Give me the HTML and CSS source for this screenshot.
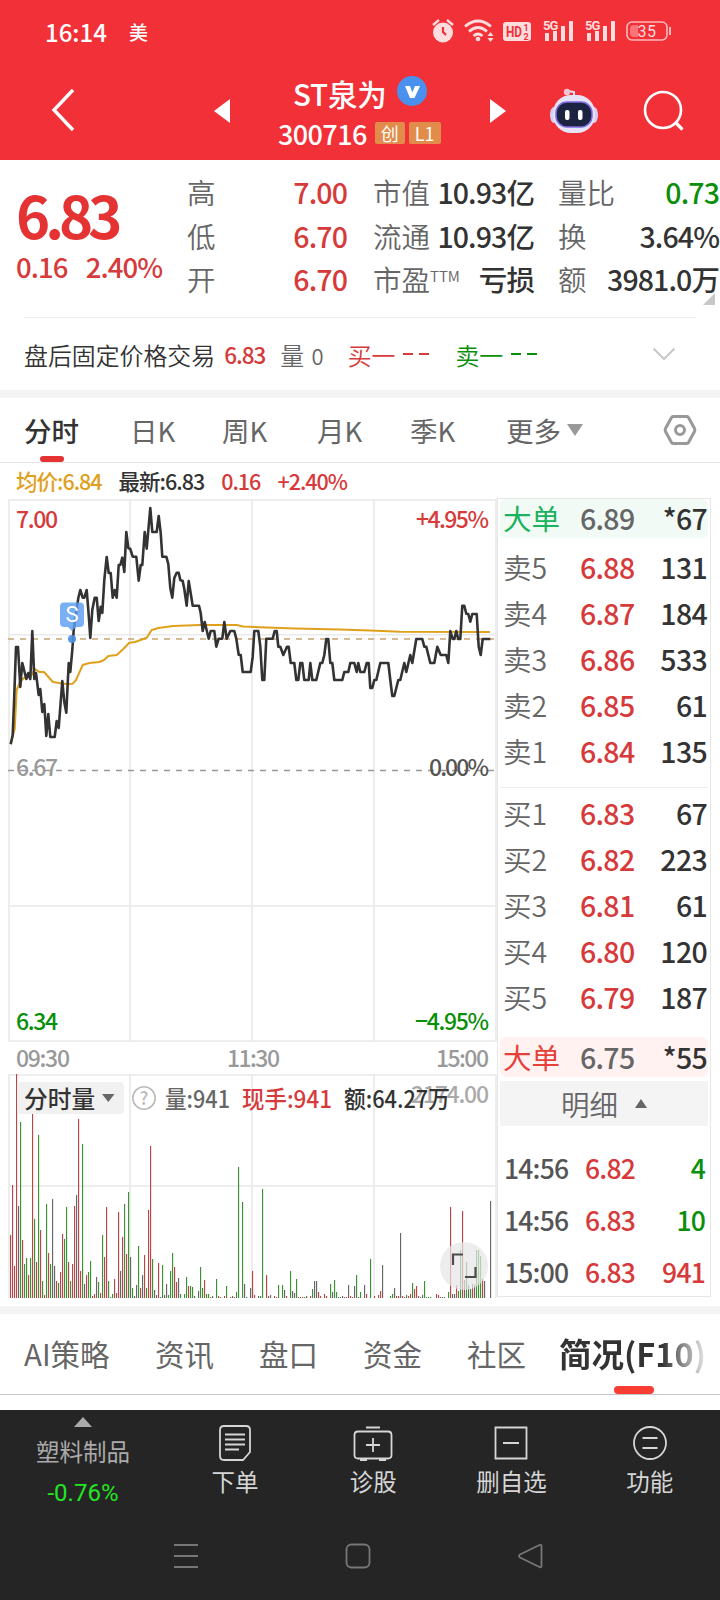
FILE: index.html
```
<!DOCTYPE html>
<html lang="zh-CN">
<head>
  <meta charset="utf-8" />
  <title>ST泉为 300716</title>
  <link rel="stylesheet" href="styles.css">
</head>
<body>
  <header class="header">
    <div class="status">
      <span class="clock">16:14</span>
      <span class="carrier">美</span>
      <svg class="status-icons" width="246" height="28" viewBox="430 18 246 28">
        <g fill="#ffdcdd">
          <circle cx="443" cy="33.500" r="10"/>
          <path d="M433 26l6-5M453 26l-6-5" stroke="#ffdcdd" stroke-width="2.4"/>
          <path d="M443 28v5l3 3" fill="none" stroke="#f23037" stroke-width="2.2"/>
          <g fill="none" stroke="#ffdcdd" stroke-width="2.8">
            <path d="M465 27.500q13-11 26 0M469 32.500q9-8 18 0M473.500 37q4.500-4 9 0"/>
          </g>
          <circle cx="478" cy="40" r="2.300"/>
          <path d="M487.500 37l3-4 3 4zM487.500 39l3 4 3-4z"/>
          <rect x="503" y="23" width="28" height="19" rx="3"/>
          <text x="506" y="38" class="hd" textLength="16" lengthAdjust="spacingAndGlyphs">HD</text>
          <text x="523.500" y="32" class="hd-num">1</text>
          <text x="523.500" y="40.500" class="hd-num">2</text>
          <text x="543" y="31" class="net">5G</text>
          <path d="M545 34h4v8h-4zM553 32h4v10h-4zM561 27h4v15h-4zM569 22h4v20h-4z"/>
          <text x="585" y="31" class="net">5G</text>
          <path d="M587 34h4v8h-4zM595 32h4v10h-4zM603 27h4v15h-4zM611 22h4v20h-4z"/>
          <rect x="627" y="23" width="40" height="18" rx="5" fill="none" stroke="#ffb9bb" stroke-width="1.600"/>
          <path d="M634 26h4v12h-4q-4 0-4-4v-4q0-4 4-4" fill="#fa7478"/>
          <path d="M669 28h2v8h-2z" fill="#ffb9bb"/>
          <text x="647" y="38" class="battery">35</text>
        </g>
      </svg>
    </div>
    <div class="titlebar">
      <svg class="back" width="24" height="44" viewBox="0 0 24 44"><path d="M22 2L3 22l19 20" fill="none" stroke="#fff" stroke-width="3.400"/></svg>
      <svg class="prev" width="16" height="24" viewBox="0 0 16 24"><path d="M16 0v24L0 12z" fill="#fff"/></svg>
      <div class="stock">
        <div class="stock-name"><span>ST泉为</span>
          <svg width="30" height="30" viewBox="0 0 30 30"><circle cx="15" cy="15" r="15" fill="#4a90ee"/><path d="M8 10l5 0 2.300 6.500L18 10h5l-5.500 12h-4.500z" fill="#fff"/></svg>
        </div>
        <div class="stock-code">300716 <b class="tag">创</b><b class="tag">L1</b></div>
      </div>
      <svg class="next" width="16" height="24" viewBox="0 0 16 24"><path d="M0 0v24l16-12z" fill="#fff"/></svg>
      <svg class="robot" width="50" height="46" viewBox="0 0 50 46">
        <path d="M25 8V4l-6-1" fill="none" stroke="#e9dff8" stroke-width="2"/>
        <circle cx="18" cy="4" r="3.200" fill="#f3c3d2"/>
        <ellipse cx="5" cy="27" rx="4" ry="8" fill="#d5cdf5"/>
        <ellipse cx="45" cy="27" rx="4" ry="8" fill="#d5cdf5"/>
        <rect x="4" y="7" width="42" height="38" rx="18" fill="#e6e2f8"/>
        <rect x="7" y="14" width="36" height="25" rx="11" fill="#1c2340" stroke="#7d6be0" stroke-width="1.500"/>
        <rect x="16" y="22" width="4.500" height="10" rx="2" fill="#fff"/>
        <rect x="29" y="22" width="4.500" height="10" rx="2" fill="#fff"/>
      </svg>
      <svg class="search" width="42" height="42" viewBox="0 0 42 42"><circle cx="20" cy="20" r="18" fill="none" stroke="#fff" stroke-width="2.600"/><path d="M32 32l7.500 7.500" stroke="#fff" stroke-width="3.200"/></svg>
    </div>
  </header>

  <section class="quote">
    <div class="price">
      <div class="price-last">6.83</div>
      <div class="price-change"><span>0.16</span><span>2.40%</span></div>
    </div>
    <dl class="stats">
      <dt>高</dt><dd class="up">7.00</dd><dt>市值</dt><dd>10.93亿</dd><dt>量比</dt><dd class="down">0.73</dd>
      <dt>低</dt><dd class="up">6.70</dd><dt>流通</dt><dd>10.93亿</dd><dt>换</dt><dd>3.64%</dd>
      <dt>开</dt><dd class="up">6.70</dd><dt>市盈<sup>TTM</sup></dt><dd>亏损</dd><dt>额</dt><dd>3981.0万</dd>
    </dl>
    <i class="corner"></i>
  </section>

  <section class="after-hours">
    <span>盘后固定价格交易</span>
    <span class="up ah-price">6.83</span>
    <span class="muted ah-vol">量 <em>0</em></span>
    <span class="up ah-buy">买一</span><i class="dashes up"></i>
    <span class="down ah-sell">卖一</span><i class="dashes down"></i>
    <svg width="24" height="14" viewBox="0 0 24 14"><path d="M1.500 1.500L12 12 22.500 1.500" fill="none" stroke="#c8c8c8" stroke-width="2"/></svg>
  </section>

  <nav class="periods">
    <a class="active">分时</a>
    <a>日K</a>
    <a>周K</a>
    <a>月K</a>
    <a>季K</a>
    <a class="more">更多<svg width="16" height="12" viewBox="0 0 16 12"><path d="M0 0h16L8 12z" fill="#999"/></svg></a>
    <svg class="settings" width="34" height="32" viewBox="0 0 34 32"><path d="M10 2.500h14q1 0 1.500 1l6 11q.8 1.500 0 3l-6 11q-.5 1-1.500 1H10q-1 0-1.500-1l-6-11q-.8-1.500 0-3l6-11q.5-1 1.500-1z" fill="none" stroke="#999" stroke-width="3"/><circle cx="17" cy="16" r="4.500" fill="none" stroke="#999" stroke-width="3"/></svg>
  </nav>

  <div class="legend">
    <span class="avg">均价:6.84</span>
    <span>最新:6.83</span>
    <span class="up">0.16</span>
    <span class="up">+2.40%</span>
  </div>

  <main class="board">
    <svg class="chart" width="497" height="801" viewBox="0 498 497 801">
      <g fill="none" stroke="#e9e9e9" stroke-width="1.600">
        <path d="M9 500H496V1041H9zM9 1298V1075H496V1298"/>
        <path d="M130 500V1041M252 500V1041M374 500V1041M9 634.700H496M9 906H496"/>
        <path d="M130 1075V1298M252 1075V1298M374 1075V1298M9 1186H496"/>
      </g>
      <path d="M8 639H496" stroke="#c9a273" stroke-width="1.600" stroke-dasharray="6 6"/>
      <path d="M8 770.500H496" stroke="#999" stroke-width="1.600" stroke-dasharray="6 6"/>
      <polyline class="line-avg" points="10.700,744 13,735 14.700,729 16.700,690 20,682 24,678 31,676 35,669 39.300,672 44,672 49.300,678 53,682 59,683 66.700,684 72.700,683.700 76,680 79.300,672.700 82.700,665 89.300,663 99.300,662 104,660 108.300,656 116.700,655 123.300,649 129.300,642.700 135,642 146.700,637.700 151.700,630 158.300,628 173.300,626 200,625 236.700,625 243,626.500 260,627.300 295,628.500 340,629.500 370,630.500 400,631.700 490,632"/>
      <polyline class="line-price" points="10.700,744.300 12.700,735 14,703 16,647 18,647 20.300,687 22.300,663 26.300,679 28.300,673 30.300,679 32.300,631 34.300,679 36,673 38.700,695 40.300,689 42.300,712 44.300,704 46.300,736 48.300,714 50.300,737 54.700,737 56.700,721 58.700,728 62.300,681 64.300,702 66.300,712.700 68.700,663 70.300,672 72.300,650 73.700,630 78.300,598 80.300,590 82.700,597.700 84.300,597.700 86.700,590 88.700,615 90.300,638 92.300,610 94.700,597.700 96.700,597.700 98.700,621 100.700,606.700 102.300,613 104.300,580 106.700,557 108.700,573 110.700,573 112.700,597.700 114.700,590 116.700,597.700 118.700,565 120.300,565 122.300,557.700 124.300,572 126.300,532 128.300,548 130.300,549 132.700,556.700 136.300,556.700 138.700,580.700 140.700,565 142.300,565 144.700,532 146.700,548.700 150.300,508 152.300,532 156.700,532 158.700,516 160.700,533 162.300,556.700 166.300,556.700 168.300,564 170.300,588 172.300,597.700 174.300,578 176.700,572.700 178.700,572.700 180.300,580 182.700,581 184.300,589 186.700,605.700 188.700,581 192.700,605.700 199,605.700 200.700,613 202.700,631 204.700,622 208.700,638.700 210.700,631 214.300,631 216.300,646.700 218.700,638.700 222.300,638.700 224.300,622 226.700,638.700 230.300,631 234.300,631 236.300,638.700 238.700,654.700 240.700,655 242.700,672 250.700,672 252.700,656.700 254.300,631 258.300,631 260.300,646.700 262.300,680 264.300,680 266.300,638.700 272.700,638.700 274.700,631 276.700,631 278.300,646.700 280.300,646.700 283.300,655 287,646.700 288.700,646.700 290.700,663 294.300,663 296.300,680 298.300,680 300.300,663 302.300,663 304.300,680 308.700,680 310.300,663 312.300,680 316.300,680 320.300,663 322.300,663 324.300,655 326.300,639 328.300,639 330.300,663 332.300,663 334.300,680 342.300,680 344.300,672 348.300,672 350.300,663 354.300,663 356.700,672 358.300,663 360.300,672 364.300,672 366.700,663 368.700,663 370.300,688 372.300,688 374.300,680 376.300,680 380.300,663 388.300,663 390.300,680 392.300,696 394.300,696 398.300,680 400.300,680 404.300,663 406.300,672 410.300,655 412.300,663 416.300,639 422.300,639 424.300,646.700 426.300,646.700 430.300,663 434.300,663 437.300,646.700 440.700,655 446.300,655 448.300,663 450.300,631 452.700,639 454.300,639 456.300,631 458.300,639 460.300,639 462.300,605.700 464.300,605.700 466.300,613.700 468.300,614 470.300,621.700 472.300,614 476.700,614 478.700,646.700 480.700,655 482.700,639 490.300,639"/>
      <path d="M64 602.500h16q4 0 4 4V623q0 4-4 4h-4l-4 4-4-4h-4q-4 0-4-4v-16.500q0-4 4-4z" fill="#5b9ff0" fill-opacity=".82"/>
      <text x="72" y="622" class="mark">S</text>
      <circle cx="72" cy="639" r="4" fill="#4a90e2" fill-opacity=".9"/>

      <g class="axis">
        <text x="16" y="528" textLength="42" fill="#d63a3a">7.00</text>
        <text x="416" y="528" textLength="73" fill="#d63a3a">+4.95%</text>
        <text x="16" y="776" textLength="42" fill="#999">6.67</text>
        <text x="429" y="776" textLength="60" fill="#555">0.00%</text>
        <text x="16" y="1029.500" textLength="42" fill="#0a8f0a">6.34</text>
        <text x="415" y="1029.500" textLength="74" fill="#0a8f0a">−4.95%</text>
        <text x="16" y="1067" textLength="54" fill="#999">09:30</text>
        <text x="227" y="1067" textLength="53" fill="#999">11:30</text>
        <text x="436" y="1067" textLength="53" fill="#999">15:00</text>
        <text x="411" y="1103" textLength="78" fill="#aaa">2174.00</text>
      </g>

      <g id="volume"></g>

      <rect x="17" y="1082" width="107" height="32" rx="4" fill="#f1f1f1"/>
      <g class="vol-legend">
        <text x="24" y="1108" fill="#333">分时量</text>
        <path d="M102 1094h12.500l-6.200 8z" fill="#666"/>
        <circle cx="144" cy="1098" r="11.200" fill="none" stroke="#bbb" stroke-width="1.600"/>
        <text x="144" y="1105" class="help">?</text>
        <text x="165" y="1107.500" textLength="65" lengthAdjust="spacingAndGlyphs" fill="#666">量:941</text>
        <text x="242" y="1107.500" textLength="90" lengthAdjust="spacingAndGlyphs" fill="#d63a3a">现手:941</text>
        <text x="344" y="1107.500" textLength="106" lengthAdjust="spacingAndGlyphs" fill="#333">额:64.27万</text>
      </g>
      <circle cx="464" cy="1266" r="24" fill="#e6e6e6" fill-opacity=".72"/>
      <path d="M453 1265v-10.500h10M465 1277h10.500v-10" fill="none" stroke="#4c4c4c" stroke-width="2.200"/>
    </svg>

    <aside class="book">
      <div class="row big sell"><b>大单</b><span>6.89</span><span>*67</span></div>
      <div class="levels">
        <div class="row"><b>卖5</b><span>6.88</span><span>131</span></div>
        <div class="row"><b>卖4</b><span>6.87</span><span>184</span></div>
        <div class="row"><b>卖3</b><span>6.86</span><span>533</span></div>
        <div class="row"><b>卖2</b><span>6.85</span><span>61</span></div>
        <div class="row"><b>卖1</b><span>6.84</span><span>135</span></div>
      </div>
      <div class="levels bids">
        <div class="row"><b>买1</b><span>6.83</span><span>67</span></div>
        <div class="row"><b>买2</b><span>6.82</span><span>223</span></div>
        <div class="row"><b>买3</b><span>6.81</span><span>61</span></div>
        <div class="row"><b>买4</b><span>6.80</span><span>120</span></div>
        <div class="row"><b>买5</b><span>6.79</span><span>187</span></div>
      </div>
      <div class="row big buy"><b>大单</b><span>6.75</span><span>*55</span></div>
      <div class="detail">明细<svg width="12" height="9" viewBox="0 0 12 9"><path d="M0 9h12L6 0z" fill="#666"/></svg></div>
      <div class="trades">
        <div><time>14:56</time><span>6.82</span><span class="down">4</span></div>
        <div><time>14:56</time><span>6.83</span><span class="down">10</span></div>
        <div><time>15:00</time><span>6.83</span><span class="up">941</span></div>
      </div>
    </aside>
  </main>

  <nav class="sections">
    <a>AI策略</a>
    <a>资讯</a>
    <a>盘口</a>
    <a>资金</a>
    <a>社区</a>
    <a class="active"><span>简况(F10)</span></a>
  </nav>

  <footer class="footer">
    <div class="actions">
      <div class="sector">
        <svg width="18" height="10" viewBox="0 0 18 10"><path d="M0 10h18L9 0z" fill="#aaa"/></svg>
        <span>塑料制品</span>
        <em>-0.76%</em>
      </div>
      <div class="action">
        <svg width="36" height="38" viewBox="0 0 36 38"><path d="M7 2h22q4 0 4 4v22l-7 8H7q-4 0-4-4V6q0-4 4-4zM8 10.500h20M8 15.500h20M8 20.500h20M8 25.500h14"/></svg>
        <span>下单</span>
      </div>
      <div class="action">
        <svg width="40" height="38" viewBox="0 0 40 38"><path d="M13 3.500h14M5 7.500h30q3.500 0 3.500 3.500v20q0 3.500-3.500 3.500H5q-3.500 0-3.500-3.500V11q0-3.500 3.500-3.500zM7 36h7M26 36h7M13 21h14M20 14v14"/></svg>
        <span>诊股</span>
      </div>
      <div class="action">
        <svg width="36" height="38" viewBox="0 0 36 38"><path d="M2.500 3.500h31v31h-31zM10 19h16"/></svg>
        <span>删自选</span>
      </div>
      <div class="action">
        <svg width="36" height="38" viewBox="0 0 36 38"><circle cx="18" cy="19" r="16"/><path d="M10.500 14h15M10.500 24h15"/></svg>
        <span>功能</span>
      </div>
    </div>
    <div class="sysnav">
      <svg width="26" height="26" viewBox="0 0 26 26"><path d="M1 2h24M1 13h24M1 24h24"/></svg>
      <svg width="26" height="26" viewBox="0 0 26 26"><rect x="1.500" y="1.500" width="23" height="23" rx="5"/></svg>
      <svg width="26" height="26" viewBox="0 0 26 26"><path d="M24.500 3v20q0 2-2 1L3 14.500q-2-1.500 0-3L22.500 2q2-1 2 1z"/></svg>
    </div>
  </footer>
  <script src="chart.js"></script>
</body>
</html>
```
FILE: styles.css
```
html, body {
  margin: 0;
  padding: 0;
}

body {
  width: 720px;
  height: 1600px;
  overflow: hidden;
  background: #fff;
  color: #333;
  font-family: "Noto Sans CJK SC", "Noto Sans", sans-serif;
  white-space: nowrap;
}

b, em, i {
  font-weight: inherit;
  font-style: normal;
}

svg {
  display: block;
  flex: none;
}

.up { color: #d63a3a; }
.down { color: #0a8f0a; }
.muted { color: #666; }

/* header */

.header {
  height: 160px;
  background: #f23037;
  color: #fff;
}

.status {
  display: flex;
  height: 62px;
  align-items: center;
  padding-left: 45px;
}

.clock {
  width: 84px;
  font-size: 24px;
  font-weight: 500;
}

.carrier {
  font-size: 19px;
  font-weight: 500;
}

.status-icons {
  margin-left: auto;
  margin-right: 44px;
}

.status-icons text {
  font-family: Roboto, sans-serif;
}

.hd { font-size: 15px; font-weight: 700; fill: #f23037; }
.hd-num { font-size: 9px; font-weight: 700; fill: #f23037; }
.net { font-size: 13px; font-weight: 700; letter-spacing: -1px; }
.battery { font-size: 16px; text-anchor: middle; letter-spacing: 0.5px; }

.titlebar {
  display: flex;
  height: 98px;
  align-items: center;
}

.back { margin-left: 51px; margin-top: -2px; }
.prev { margin-left: 139px; }
.next { margin-left: 48px; }
.robot { margin-left: 43px; }
.search { margin-left: 44px; }

.stock {
  width: 163px;
  margin-left: 48px;
  margin-right: 1px;
}

.stock-name {
  display: flex;
  height: 42px;
  align-items: center;
  padding-left: 15px;
  padding-top: 2px;
  font-size: 29.500px;
  font-weight: 500;
  letter-spacing: -0.2px;
}

.stock-name span {
  margin-top: 3px;
}

.stock-name svg {
  margin-left: 10px;
}

.stock-code {
  display: flex;
  height: 42px;
  align-items: center;
  font-size: 27px;
  font-weight: 500;
  letter-spacing: -0.6px;
}

.tag {
  margin-left: 4px;
  padding: 0 6px;
  border-radius: 2px;
  background: #e28c4b;
  font-size: 18px;
  font-weight: 400;
  line-height: 22px;
  letter-spacing: 0;
}

.tag:first-of-type {
  margin-left: 8px;
}

/* quote */

.quote {
  position: relative;
  display: flex;
  height: 157px;
}

.price {
  width: 187px;
  padding-left: 16px;
  box-sizing: border-box;
  color: #d63a3a;
  font-weight: 500;
}

.price-last {
  margin-top: 19px;
  color: #e53333;
  font-size: 58px;
  font-weight: 700;
  line-height: 70px;
  letter-spacing: -5px;
}

.price-change {
  display: flex;
  gap: 18px;
  margin-top: -1px;
  font-size: 27.500px;
  line-height: 36px;
  letter-spacing: -0.9px;
}

.stats {
  display: grid;
  flex: none;
  margin: 10px 0 0;
  grid-template-columns: 80px 80px 94px 93px 92px 93px;
  grid-auto-rows: 43.7px;
  font-size: 28.500px;
  line-height: 44px;
}

.stats dt {
  color: #666;
  font-weight: 350;
}

.stats dd {
  display: flex;
  justify-content: flex-end;
  margin: 0;
  font-weight: 500;
  letter-spacing: -0.9px;
}

.stats dt:nth-of-type(3n+2) { margin-left: 26px; }
.stats dt:nth-of-type(3n) { margin-left: 24px; }

.stats sup {
  position: relative;
  top: -9px;
  font-size: 15px;
  line-height: 0;
  vertical-align: baseline;
}

.corner {
  position: absolute;
  right: 5px;
  bottom: 12px;
  border: 6px solid #c8c8c8;
  border-top-color: transparent;
  border-left-color: transparent;
}

/* after-hours strip */

.after-hours {
  display: flex;
  height: 72px;
  align-items: center;
  margin: 0 24px;
  border-top: 1px solid #ececec;
  font-size: 23.900px;
  font-weight: 350;
}

.ah-price { margin-left: 9px; font-size: 22.500px; font-weight: 500; letter-spacing: -1px; }
.ah-vol { margin-left: 15px; }
.ah-vol em { font-size: 22px; margin-left: 2px; }
.ah-buy { margin-left: 24px; }
.ah-sell { margin-left: 26px; }

.dashes {
  width: 6px;
  height: 2px;
  margin-left: 8px;
  border: solid;
  border-width: 0 10px;
}

.after-hours svg {
  margin-left: auto;
  margin-right: 20px;
}

/* period tabs */

.periods {
  display: grid;
  grid-template-columns: 106px 92px 95px 93px 96px 150px 40px;
  height: 64px;
  align-items: center;
  padding-left: 24px;
  border-top: 8px solid #f4f4f4;
  border-bottom: 1px solid #e6e6e6;
  color: #666;
  font-size: 27.500px;
}

.periods a {
  height: 64px;
  line-height: 64px;
  margin-top: -1px;
}

.periods .active {
  position: relative;
  color: #333;
  font-weight: 500;
}

.periods .active::after {
  content: "";
  position: absolute;
  left: 16px;
  bottom: 0;
  width: 24px;
  height: 6px;
  border-radius: 3px;
  background: #e53333;
}

.more {
  display: flex;
  align-items: center;
  gap: 6px;
}

.settings {
  margin-left: 7px;
}

.legend {
  display: flex;
  gap: 17px;
  height: 35px;
  padding-left: 16px;
  font-size: 21.500px;
  font-weight: 500;
  line-height: 36px;
  letter-spacing: -1px;
}

.avg { color: #dfa01c; }

/* chart and order book */

.board {
  display: flex;
  height: 808px;
}

.line-avg,
.line-price {
  fill: none;
  stroke-linejoin: round;
  stroke-width: 2;
  stroke: #dfa01c;
}

.line-price {
  stroke: #333;
  stroke-width: 2.6;
}

.mark {
  fill: #fff;
  font: 22px Roboto, sans-serif;
  text-anchor: middle;
}

.axis {
  font-size: 23px;
  font-weight: 500;
}

.vol-legend {
  font-size: 23.700px;
  font-weight: 500;
}

.help {
  fill: #bbb;
  font-size: 18px;
  text-anchor: middle;
}

.book {
  width: 214px;
  height: 799px;
  box-sizing: border-box;
  padding: 0 2px;
  border: 1px solid #e6e6e6;
}

.row {
  display: grid;
  grid-template-columns: 77px 60px 1fr;
  height: 46px;
  padding: 0 1px 0 3px;
  font-size: 28.500px;
  line-height: 44px;
}

.row b {
  color: #666;
  font-weight: 350;
}

.row span {
  color: #d63a3a;
  font-weight: 500;
  letter-spacing: -0.7px;
}

.row span:last-child {
  color: #333;
  text-align: right;
}

.levels {
  height: 242px;
  padding-top: 7px;
  border-bottom: 1px solid #eee;
}

.bids {
  height: 246px;
  padding-top: 3px;
  border: 0;
}

.big {
  height: 39px;
  border-radius: 6px;
  line-height: 37px;
}

.big b { font-weight: 400; }
.big span { color: #666; }
.sell { background: #f2faf6; }
.sell b { color: #1ab25c; }
.buy { height: 40px; background: #fff2f1; line-height: 39px; }
.buy b { color: #e5403a; }

.detail {
  display: flex;
  height: 45px;
  align-items: center;
  justify-content: center;
  gap: 17px;
  margin-top: 4px;
  margin-bottom: 16px;
  background: #f4f4f4;
  color: #666;
  font-size: 28.500px;
  font-weight: 350;
}

.trades div {
  display: grid;
  grid-template-columns: 81px 60px 1fr;
  height: 52px;
  padding: 0 3px 0 4px;
  color: #555;
  font-size: 26.500px;
  font-weight: 500;
  line-height: 52px;
  letter-spacing: -0.8px;
}

.trades time + span { color: #d63a3a; }
.trades span:last-child { text-align: right; }

/* bottom tabs */

.sections {
  display: grid;
  grid-template-columns: 131px 104px 104px 104px 92px 160px;
  height: 80px;
  padding-left: 24px;
  border-top: 8px solid #f4f4f4;
  border-bottom: 1px solid #c6c6c6;
  color: #666;
  font-size: 29.500px;
  line-height: 78px;
}

.sections .active {
  position: relative;
  font-size: 32.500px;
  font-weight: 700;
}

.sections .active span {
  background: linear-gradient(90deg, #333 70%, #ddd 98%);
  -webkit-background-clip: text;
  background-clip: text;
  color: transparent;
}

.sections .active::after {
  content: "";
  position: absolute;
  left: 55px;
  bottom: 0;
  width: 40px;
  height: 8px;
  border-radius: 4px;
  background: #f93d33;
}

.footer {
  height: 190px;
  margin-top: 15px;
  background: #252525;
  color: #d6d6d6;
}

.actions {
  display: grid;
  grid-template-columns: 166px repeat(4, 138.200px);
  height: 110px;
  font-size: 23.500px;
}

.sector,
.action {
  display: flex;
  flex-direction: column;
  align-items: center;
}

.sector {
  padding-top: 7px;
  color: #aaa;
}

.sector span { line-height: 48px; }

.sector em {
  color: #22e622;
  font: 24px/36px Roboto, sans-serif;
}

.action svg {
  margin-top: 14px;
  fill: none;
  stroke: #d6d6d6;
  stroke-width: 1.8;
}

.action span { line-height: 38px; }

.sysnav {
  display: flex;
  justify-content: center;
  gap: 146px;
  padding-top: 23px;
  padding-right: 4px;
}

.sysnav svg {
  fill: none;
  stroke: #777;
  stroke-width: 1.8;
}
```
FILE: chart.js
```
// per-minute volume: minute index, direction (r up, g down, k flat), bar height
var volume = "0r63 1r113 2r32 3r224 4k92 5g176 6r58 7g34 8g40 9r23 10g40 11r190 12g79 13r36 14g163 15r68 16g17 17r3 18g94 19r45 " +
  "20g34 21k99 22k32 23r17 24g15 25r26 26r64 27g59 28g91 29r36 30g17 31r34 32r92 33k103 34r179 35r27 36g154 37k14 38r23 39g26 " +
  "40g37 41r2 42r4 43k21 44g16 45r5 46g63 47r41 48r91 49g17 50g1 51g4 52r19 53r5 54r86 55k27 56r61 57g94 58r44 59g106 " +
  "60k41 61g10 62k2 63k13 64g52 65r10 66k23 67r43 68g10 69r88 70r152 71g39 72k8 73k3 74r35 75g1 76g33 77k3 78k14 79g3 " +
  "80g27 81g45 82r31 83r16 84k20 85g4 87g4 88g21 89r12 90g12 91g11 92k2 94k7 95g31 96g10 97r18 98g4 99g4 " +
  "100r1 101k2 103g19 104r2 105k1 107r2 108g12 110r1 111k2 112k1 113g6 114g131 116g96 117k14 118k1 " +
  "120k10 121r27 122r3 124k2 125g2 126g109 128r23 129k2 130k3 132r2 133r1 134g13 136g13 137k8 138r2 " +
  "140g27 141k7 142k5 143g19 144r1 145r1 146r1 147g1 148k2 150r2 151g9 152k17 153k17 154r6 155r2 157r4 158r2 " +
  "160g14 161k6 162g18 163g6 164k1 165k1 166k2 167r1 168r1 169k13 170r2 171r1 172k12 173g23 174r1 175g6 177k13 178r4 " +
  "180g39 182r2 184r3 185r7 186k33 190g2 191g4 192k10 193r2 194r2 195k65 196r2 197k1 198g3 199r2 " +
  "200r4 201g15 202r9 203r12 204k2 205k1 206k3 207g17 208g1 209g1 210g1 213r4 214r3 215k1 216k1 217k1 219g6 " +
  "220r91 221k4 222k4 223r13 224g7 225g48 226r87 227k18 228g36 229k13 230g9 231r14 232k13 233g48 234g48 235g42 236r19 237k17 240k97";
var colors = { r: '#b8474a', g: '#3c9232', k: '#666' };
var base = 1298;

volume.split(' ').forEach(function(item) {
  var m = item.match(/(\d+)([rgk])(\d+)/);
  var bar = document.createElementNS('http://www.w3.org/2000/svg', 'rect');
  bar.setAttribute('x', 10 + m[1] * 2);
  bar.setAttribute('y', base - m[3]);
  bar.setAttribute('width', 1.15);
  bar.setAttribute('height', m[3]);
  bar.setAttribute('fill', colors[m[2]]);
  document.getElementById('volume').appendChild(bar);
});
```
